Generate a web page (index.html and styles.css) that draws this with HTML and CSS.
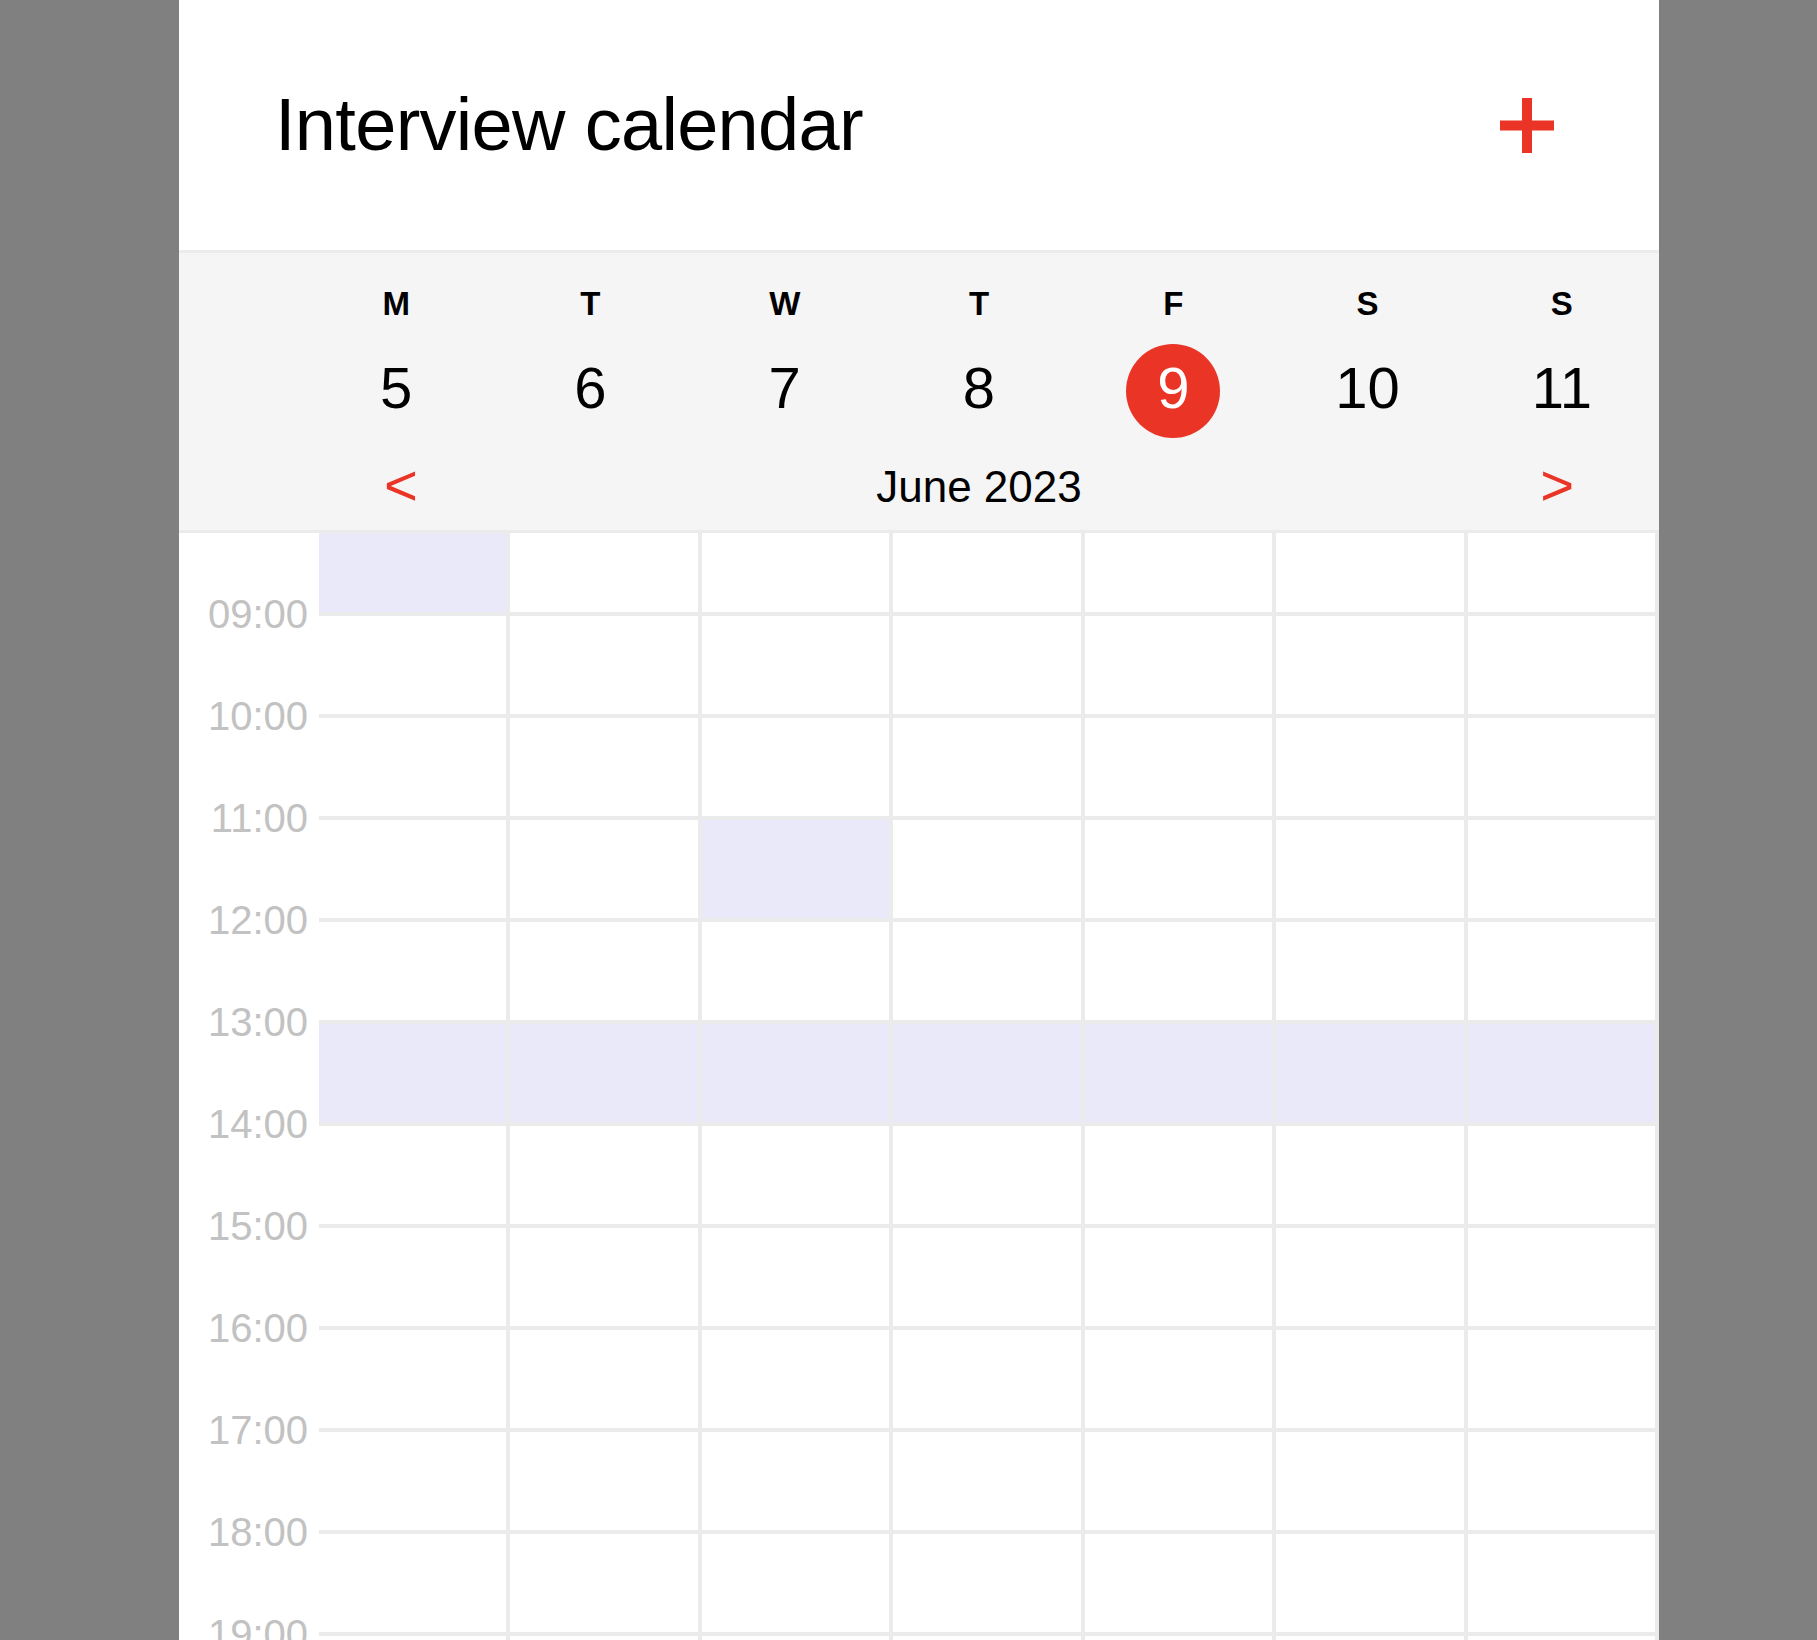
FILE: index.html
```html
<!DOCTYPE html>
<html lang="en">
<head>
<meta charset="utf-8">
<title>Interview calendar</title>
<link rel="stylesheet" href="styles.css">
</head>
<body>
<div class="app">
  <header class="topbar">
    <h1 class="title">Interview calendar</h1>
    <button class="add" aria-label="Add interview">
      <svg width="54" height="55" viewBox="0 0 54 55"><rect x="22" y="0" width="10" height="55"/><rect x="0" y="22.5" width="54" height="10"/></svg>
    </button>
  </header>

  <section class="week">
    <div class="days">
      <div class="day"><span class="dow">M</span><div class="date"><span class="num">5</span></div></div>
      <div class="day"><span class="dow">T</span><div class="date"><span class="num">6</span></div></div>
      <div class="day"><span class="dow">W</span><div class="date"><span class="num">7</span></div></div>
      <div class="day"><span class="dow">T</span><div class="date"><span class="num">8</span></div></div>
      <div class="day"><span class="dow">F</span><div class="date today"><span class="num">9</span></div></div>
      <div class="day"><span class="dow">S</span><div class="date"><span class="num">10</span></div></div>
      <div class="day"><span class="dow">S</span><div class="date"><span class="num">11</span></div></div>
    </div>
    <div class="month">
      <button class="nav">&lt;</button>
      <span class="month-label">June 2023</span>
      <button class="nav">&gt;</button>
    </div>
  </section>

  <div class="scroll">
    <div class="grid">
      <div class="time"></div>
      <div class="cell busy"></div><div class="cell"></div><div class="cell"></div><div class="cell"></div><div class="cell"></div><div class="cell"></div><div class="cell"></div>

      <div class="time">09:00</div>
      <div class="cell"></div><div class="cell"></div><div class="cell"></div><div class="cell"></div><div class="cell"></div><div class="cell"></div><div class="cell"></div>

      <div class="time">10:00</div>
      <div class="cell"></div><div class="cell"></div><div class="cell"></div><div class="cell"></div><div class="cell"></div><div class="cell"></div><div class="cell"></div>

      <div class="time">11:00</div>
      <div class="cell"></div><div class="cell"></div><div class="cell busy"></div><div class="cell"></div><div class="cell"></div><div class="cell"></div><div class="cell"></div>

      <div class="time">12:00</div>
      <div class="cell"></div><div class="cell"></div><div class="cell"></div><div class="cell"></div><div class="cell"></div><div class="cell"></div><div class="cell"></div>

      <div class="time">13:00</div>
      <div class="cell busy"></div><div class="cell busy"></div><div class="cell busy"></div><div class="cell busy"></div><div class="cell busy"></div><div class="cell busy"></div><div class="cell busy"></div>

      <div class="time">14:00</div>
      <div class="cell"></div><div class="cell"></div><div class="cell"></div><div class="cell"></div><div class="cell"></div><div class="cell"></div><div class="cell"></div>

      <div class="time">15:00</div>
      <div class="cell"></div><div class="cell"></div><div class="cell"></div><div class="cell"></div><div class="cell"></div><div class="cell"></div><div class="cell"></div>

      <div class="time">16:00</div>
      <div class="cell"></div><div class="cell"></div><div class="cell"></div><div class="cell"></div><div class="cell"></div><div class="cell"></div><div class="cell"></div>

      <div class="time">17:00</div>
      <div class="cell"></div><div class="cell"></div><div class="cell"></div><div class="cell"></div><div class="cell"></div><div class="cell"></div><div class="cell"></div>

      <div class="time">18:00</div>
      <div class="cell"></div><div class="cell"></div><div class="cell"></div><div class="cell"></div><div class="cell"></div><div class="cell"></div><div class="cell"></div>

      <div class="time">19:00</div>
      <div class="cell"></div><div class="cell"></div><div class="cell"></div><div class="cell"></div><div class="cell"></div><div class="cell"></div><div class="cell"></div>
    </div>
  </div>
</div>
</body>
</html>
```

FILE: styles.css
```css
html, body {
  margin: 0;
  padding: 0;
  height: 100%;
  overflow: hidden;
}

body {
  background: #808080;
  font-family: "Liberation Sans", Arial, Helvetica, sans-serif;
  color: #000;
}

.app {
  width: 1480px;
  margin-left: 179px;
  height: 100vh;
  background: #fff;
  display: flex;
  flex-direction: column;
  overflow: hidden;
}

/* ---------- top bar ---------- */
.topbar {
  flex-shrink: 0;
  height: 250px;
  padding: 0 105px 0 96px;
  display: flex;
  align-items: center;
  justify-content: space-between;
  border-bottom: 3px solid #ebebeb;
}

.title {
  margin: 0;
  font-size: 74px;
  line-height: 80px;
  font-weight: 400;
  letter-spacing: -0.7px;
}

.add {
  border: 0;
  padding: 0;
  background: transparent;
  display: flex;
  cursor: pointer;
}

.add svg {
  fill: #ea3526;
  display: block;
}

/* ---------- week header ---------- */
.week {
  flex-shrink: 0;
  background: #f5f5f5;
  padding: 31px 0 18px 120px;
  border-bottom: 3px solid #ebebeb;
}

.days {
  display: grid;
  grid-template-columns: repeat(7, 1fr);
}

.day {
  display: flex;
  flex-direction: column;
  align-items: center;
}

.dow {
  font-size: 33px;
  line-height: 40px;
  font-weight: 700;
}

.date {
  margin-top: 19px;
  height: 96px;
  display: flex;
  align-items: center;
  justify-content: center;
}

.num {
  font-size: 58px;
  line-height: 1;
  padding-bottom: 6px;
}

.today .num {
  box-sizing: border-box;
  width: 94px;
  height: 94px;
  border-radius: 50%;
  background: #ea3526;
  color: #fff;
  display: flex;
  align-items: center;
  justify-content: center;
}

.month {
  margin-top: 23px;
  padding: 0 85px;
  height: 50px;
  display: flex;
  align-items: center;
  justify-content: space-between;
}

.month-label {
  font-size: 44px;
  line-height: 50px;
}

.nav {
  border: 0;
  padding: 0 0 4px;
  background: transparent;
  color: #ea3526;
  font-family: inherit;
  font-size: 58px;
  line-height: 50px;
  cursor: pointer;
}

/* ---------- time grid ---------- */
.scroll {
  flex: 1;
  overflow: hidden;
}

.grid {
  display: grid;
  grid-template-columns: 140px repeat(7, 1fr);
  grid-auto-rows: 102px;
  margin-top: -19px;
}

.time {
  align-self: start;
  margin-top: -22px;
  padding-right: 11px;
  text-align: right;
  font-size: 40px;
  line-height: 40px;
  color: #c2c2c2;
}

.cell {
  background: #fff;
  border-right: 4px solid #ebebeb;
  border-bottom: 4px solid #ebebeb;
}

.cell.busy {
  background: #e9e9fa;
}
```
